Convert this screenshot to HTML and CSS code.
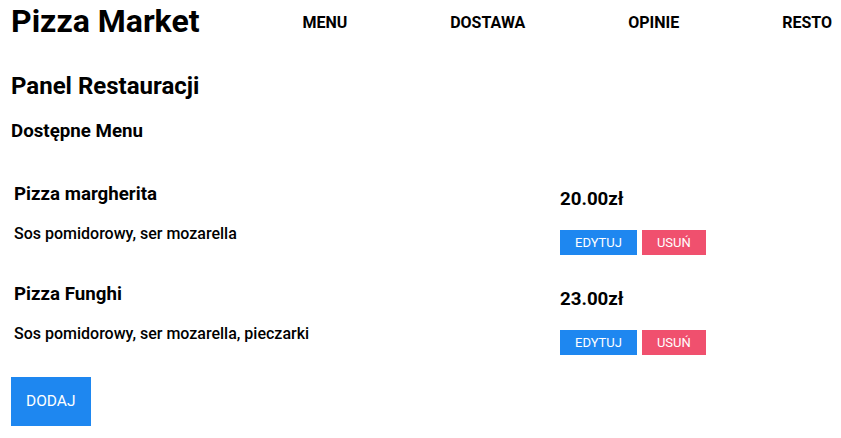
FILE: index.html
```html
<!DOCTYPE html>
<html lang="pl">
<head>
<meta charset="utf-8">
<title>Pizza Market</title>
<link rel="stylesheet" href="styles.css">
</head>
<body>
<header class="topbar">
  <h1 class="brand">Pizza Market</h1>
  <a class="nav-link" href="#">MENU</a>
  <a class="nav-link" href="#">DOSTAWA</a>
  <a class="nav-link" href="#">OPINIE</a>
  <a class="nav-link" href="#">RESTO</a>
</header>
<main class="panel">
  <h2 class="panel-title">Panel Restauracji</h2>
  <h3 class="section-title">Dostępne Menu</h3>
  <div class="menu-list">
    <div class="menu-item">
      <div class="item-info">
        <h4 class="item-name">Pizza margherita</h4>
        <p class="item-desc">Sos pomidorowy, ser mozarella</p>
      </div>
      <div class="item-side">
        <div class="item-price">20.00zł</div>
        <div class="item-actions">
          <button class="btn btn-small btn-primary">EDYTUJ</button>
          <button class="btn btn-small btn-danger">USUŃ</button>
        </div>
      </div>
    </div>
    <div class="menu-item">
      <div class="item-info">
        <h4 class="item-name">Pizza Funghi</h4>
        <p class="item-desc">Sos pomidorowy, ser mozarella, pieczarki</p>
      </div>
      <div class="item-side">
        <div class="item-price">23.00zł</div>
        <div class="item-actions">
          <button class="btn btn-small btn-primary">EDYTUJ</button>
          <button class="btn btn-small btn-danger">USUŃ</button>
        </div>
      </div>
    </div>
  </div>
  <button class="btn btn-large btn-primary">DODAJ</button>
</main>
</body>
</html>
```

FILE: styles.css
```css
* { box-sizing: border-box; }
html, body { margin: 0; padding: 0; background: #fff; }
body {
  font-family: Roboto, "Liberation Sans", Arial, sans-serif;
  color: #000;
  padding: 0 9px 0 11px;
}
.topbar {
  display: flex;
  justify-content: space-between;
  align-items: center;
  padding-top: 2px;
  height: 40px;
}
.brand {
  margin: 0;
  font-size: 32px;
  line-height: 38px;
  font-weight: 700;
}
.nav-link {
  color: #000;
  text-decoration: none;
  font-size: 16px;
  line-height: 19px;
  font-weight: 700;
  padding-top: 2px;
}
.panel { display: flex; flex-direction: column; align-items: flex-start; }
.panel-title {
  margin: 32px 0 0;
  font-size: 24px;
  line-height: 28px;
  font-weight: 700;
}
.section-title {
  margin: 20px 0 0;
  font-size: 18.72px;
  line-height: 22px;
  font-weight: 700;
}
.menu-list {
  align-self: stretch;
  display: flex;
  flex-direction: column;
  gap: 27px;
  margin-top: 40px;
}
.menu-item {
  display: grid;
  grid-template-columns: 549px 1fr;
}
.item-info { padding-left: 3px; }
.item-name {
  margin: 0;
  font-size: 18.72px;
  line-height: 25px;
  font-weight: 700;
}
.item-desc {
  margin: 17px 0 0;
  font-size: 16px;
  line-height: 20px;
  font-weight: 500;
}
.item-price {
  margin-top: 6px;
  font-size: 18.72px;
  line-height: 22px;
  font-weight: 700;
}
.item-actions {
  display: flex;
  gap: 5px;
  margin-top: 20px;
}
.btn {
  border: none;
  color: #fff;
  font-family: Roboto, "Liberation Sans", Arial, sans-serif;
  font-weight: 400;
  padding: 0 15px;
  cursor: pointer;
}
.btn-small { font-size: 13px; height: 25px; line-height: 25px; }
.btn-large { font-size: 15.5px; height: 49px; line-height: 49px; margin-top: 22px; }
.btn-primary { background: #1e87f0; }
.btn-danger { background: #f0506e; }
```
